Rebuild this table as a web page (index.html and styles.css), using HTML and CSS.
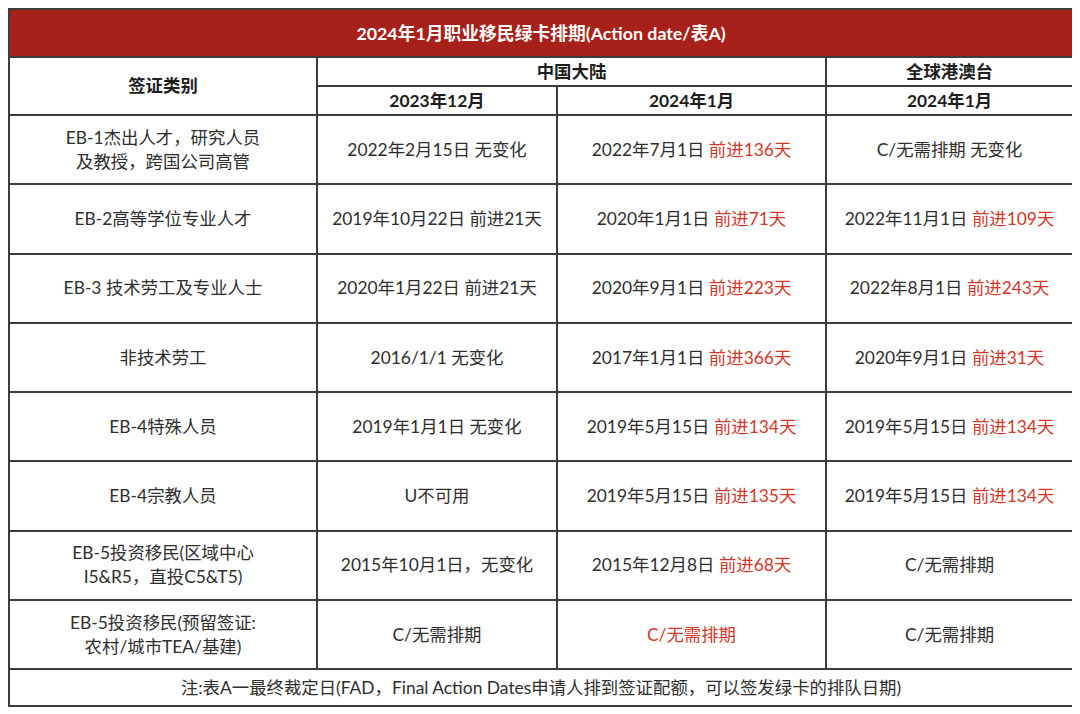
FILE: index.html
```html
<!DOCTYPE html>
<html lang="zh-CN">
<head>
<meta charset="utf-8">
<title>2024年1月职业移民绿卡排期</title>
<link rel="stylesheet" href="styles.css">
</head>
<body>
<table class="visa">
  <colgroup>
    <col class="c1"><col class="c2"><col class="c3"><col class="c4">
  </colgroup>
  <thead>
    <tr class="title-row"><th colspan="4" class="title">2024年1月职业移民绿卡排期(Action date/表A)</th></tr>
    <tr class="head-row">
      <th rowspan="2">签证类别</th>
      <th colspan="2">中国大陆</th>
      <th>全球港澳台</th>
    </tr>
    <tr class="head-row">
      <th>2023年12月</th>
      <th>2024年1月</th>
      <th>2024年1月</th>
    </tr>
  </thead>
  <tbody>
    <tr class="row">
      <td>EB-1杰出人才，研究人员<br>及教授，跨国公司高管</td>
      <td>2022年2月15日 无变化</td>
      <td>2022年7月1日 <span class="up">前进136天</span></td>
      <td>C/无需排期 无变化</td>
    </tr>
    <tr class="row">
      <td>EB-2高等学位专业人才</td>
      <td>2019年10月22日 前进21天</td>
      <td>2020年1月1日 <span class="up">前进71天</span></td>
      <td>2022年11月1日 <span class="up">前进109天</span></td>
    </tr>
    <tr class="row">
      <td>EB-3 技术劳工及专业人士</td>
      <td>2020年1月22日 前进21天</td>
      <td>2020年9月1日 <span class="up">前进223天</span></td>
      <td>2022年8月1日 <span class="up">前进243天</span></td>
    </tr>
    <tr class="row">
      <td>非技术劳工</td>
      <td>2016/1/1 无变化</td>
      <td>2017年1月1日 <span class="up">前进366天</span></td>
      <td>2020年9月1日 <span class="up">前进31天</span></td>
    </tr>
    <tr class="row">
      <td>EB-4特殊人员</td>
      <td>2019年1月1日 无变化</td>
      <td>2019年5月15日 <span class="up">前进134天</span></td>
      <td>2019年5月15日 <span class="up">前进134天</span></td>
    </tr>
    <tr class="row">
      <td>EB-4宗教人员</td>
      <td>U不可用</td>
      <td>2019年5月15日 <span class="up">前进135天</span></td>
      <td>2019年5月15日 <span class="up">前进134天</span></td>
    </tr>
    <tr class="row">
      <td>EB-5投资移民(区域中心<br>I5&amp;R5，直投C5&amp;T5)</td>
      <td>2015年10月1日，无变化</td>
      <td>2015年12月8日 <span class="up">前进68天</span></td>
      <td>C/无需排期</td>
    </tr>
    <tr class="row">
      <td>EB-5投资移民(预留签证:<br>农村/城市TEA/基建)</td>
      <td>C/无需排期</td>
      <td><span class="up">C/无需排期</span></td>
      <td>C/无需排期</td>
    </tr>
  </tbody>
  <tfoot>
    <tr class="foot-row"><td colspan="4">注:表A一最终裁定日(FAD，Final Action Dates申请人排到签证配额，可以签发绿卡的排队日期)</td></tr>
  </tfoot>
</table>
</body>
</html>
```
FILE: styles.css
```css
html, body {
  background: #ffffff;
}
body {
  margin: 8px;
  font-family: "Lato", "Noto Sans CJK SC", sans-serif;
  color: #2e2e2e;
}
.visa {
  width: 1064px;
  border-collapse: collapse;
  table-layout: fixed;
  font-size: 17.4px;
}
.c1 { width: 308px; }
.c2 { width: 240px; }
.c3 { width: 269px; }
.c4 { width: 247px; }
.visa th,
.visa td {
  border: 2px solid #3c3c3c;
  text-align: center;
  vertical-align: middle;
  padding: 0;
  line-height: 24px;
}
.title-row { height: 48px; }
.title {
  background: #a8201a;
  color: #ffffff;
  font-weight: 700;
  font-size: 17.8px;
}
.head-row { height: 29px; }
.head-row th {
  font-weight: 700;
  color: #1e1e1e;
}
.row { height: 69.3px; }
.up { color: #d2372c; }
.foot-row { height: 37px; }
```
